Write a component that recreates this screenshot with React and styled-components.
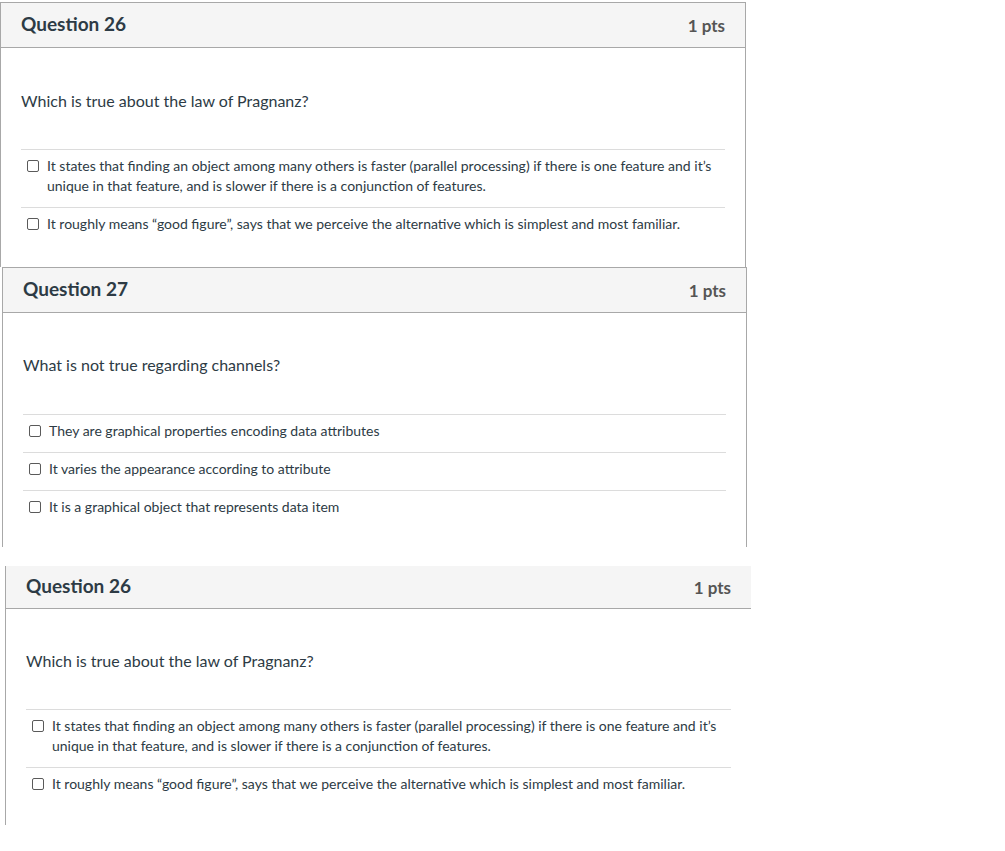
import React from 'react';
import styled, { createGlobalStyle } from 'styled-components';

const GlobalStyle = createGlobalStyle`
  html, body {
    margin: 0;
    padding: 0;
    background: #ffffff;
  }
  body {
    font-family: Lato, "Open Sans", "Liberation Sans", sans-serif;
    color: #2d3b45;
  }
`

const Page = styled.div`
  display: flex;
  flex-direction: column;
  align-items: flex-start;
  padding-top: 2px;
`

const Card = styled.div`
  box-sizing: border-box;
  width: ${p => p.$width}px;
  margin-left: ${p => p.$offset}px;
  margin-top: ${p => p.$gap || 0}px;
  border-left: 1px solid #a8a8a8;
  border-right: ${p => (p.$noRight ? 'none' : '1px solid #a8a8a8')};
  border-top: ${p => (p.$noTop ? 'none' : '1px solid #a8a8a8')};
  background: #fff;
`

const Header = styled.div`
  display: flex;
  align-items: center;
  justify-content: space-between;
  height: ${p => p.$height}px;
  padding: 0 20px;
  background: #f5f5f5;
  border-bottom: 1px solid #a8a8a8;
`

const Title = styled.div`
  font-weight: 700;
  font-size: 19px;
  margin-bottom: 3px;
  color: #2d3b45;
`

const Points = styled.div`
  font-weight: 700;
  font-size: 17px;
  color: #555555;
`

const Body = styled.div`
  padding: ${p => p.$top}px 20px ${p => p.$bottom}px 20px;
`

const Prompt = styled.div`
  font-size: 16px;
  line-height: 20px;
  margin-bottom: ${p => p.$space}px;
`

const Answers = styled.div`
  display: flex;
  flex-direction: column;
`

const Answer = styled.label`
  display: flex;
  align-items: flex-start;
  gap: 8px;
  padding: 6px 0 11px 6px;
  border-top: 1px solid #dcdcdc;
  font-size: 14px;
  line-height: 20px;
  color: #2d3b45;
`

const Box = styled.span`
  flex: none;
  box-sizing: border-box;
  width: 12px;
  height: 12px;
  margin-top: 4px;
  border: 1.5px solid #5a5a5a;
  border-radius: 2px;
  background: #fff;
`

const Question = ({ q, ...rest }) => (
  <Card {...rest}>
    <Header $height={q.headerHeight}>
      <Title>{q.title}</Title>
      <Points>1 pts</Points>
    </Header>
    <Body $top={q.padTop} $bottom={q.padBottom}>
      <Prompt $space={q.promptSpace}>{q.prompt}</Prompt>
      <Answers>
        {q.answers.map((a, i) => (
          <Answer key={i}>
            <Box />
            <span>{a}</span>
          </Answer>
        ))}
      </Answers>
    </Body>
  </Card>
)

const pragnanz = {
  title: 'Question 26',
  headerHeight: 44,
  padTop: 43,
  padBottom: 22,
  promptSpace: 38,
  prompt: 'Which is true about the law of Pragnanz?',
  answers: [
    'It states that finding an object among many others is faster (parallel processing) if there is one feature and it\u2019s unique in that feature, and is slower if there is a conjunction of features.',
    'It roughly means \u201cgood figure\u201d, says that we perceive the alternative which is simplest and most familiar.',
  ],
}

const channels = {
  title: 'Question 27',
  headerHeight: 44,
  padTop: 42,
  padBottom: 19,
  promptSpace: 39,
  prompt: 'What is not true regarding channels?',
  answers: [
    'They are graphical properties encoding data attributes',
    'It varies the appearance according to attribute',
    'It is a graphical object that represents data item',
  ],
}

export default function App() {
  return (
    <Page>
      <GlobalStyle />
      <Question q={pragnanz} $width={746} $offset={0} />
      <Question q={channels} $width={745} $offset={2} />
      <Question
        q={{ ...pragnanz, headerHeight: 42, padTop: 42, padBottom: 20 }}
        $width={746}
        $offset={5}
        $gap={19}
        $noTop
        $noRight
      />
    </Page>
  )
}
